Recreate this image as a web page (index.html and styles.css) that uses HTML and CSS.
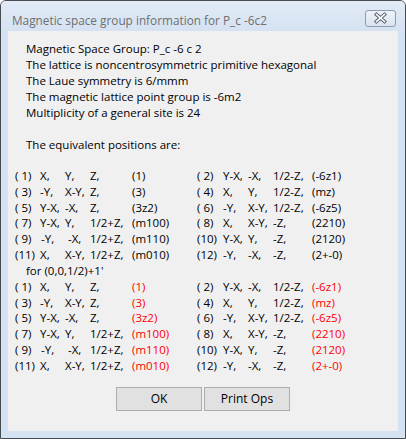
FILE: index.html
```
<!DOCTYPE html>
<html>
<head>
<meta charset="utf-8">
<link rel="stylesheet" href="styles.css">
</head>
<body>
<div class="window">
  <div class="titlebar">
    <div class="title">Magnetic space group information for P_c -6c2</div>
    <div class="close">
      <svg width="31" height="17" viewBox="0 0 31 17">
        <path d="M11.5 4.5 L19.5 11.5 M19.5 4.5 L11.5 11.5" stroke="#5b6573" stroke-width="3.6" stroke-linecap="square" fill="none"/>
        <path d="M11.5 4.5 L19.5 11.5 M19.5 4.5 L11.5 11.5" stroke="#ffffff" stroke-width="1.6" stroke-linecap="square" fill="none"/>
      </svg>
    </div>
  </div>
  <div class="client">
    <div class="info">
      <div>Magnetic Space Group: P_c -6 c 2</div>
      <div>The lattice is noncentrosymmetric primitive hexagonal</div>
      <div>The Laue symmetry is 6/mmm</div>
      <div>The magnetic lattice point group is -6m2</div>
      <div>Multiplicity of a general site is 24</div>
      <div>&nbsp;</div>
      <div>The equivalent positions are:</div>
    </div>
    <div class="ops">
      <span>( 1)</span><span>X,</span><span>Y,</span><span>Z,</span><span>(1)</span>
      <span>( 2)</span><span>Y-X,</span><span>-X,</span><span>1/2-Z,</span><span>(-6z1)</span>
      <span>( 3)</span><span>-Y,</span><span>X-Y,</span><span>Z,</span><span>(3)</span>
      <span>( 4)</span><span>X,</span><span>Y,</span><span>1/2-Z,</span><span>(mz)</span>
      <span>( 5)</span><span>Y-X,</span><span>-X,</span><span>Z,</span><span>(3z2)</span>
      <span>( 6)</span><span>-Y,</span><span>X-Y,</span><span>1/2-Z,</span><span>(-6z5)</span>
      <span>( 7)</span><span>Y-X,</span><span>Y,</span><span>1/2+Z,</span><span>(m100)</span>
      <span>( 8)</span><span>X,</span><span>X-Y,</span><span>-Z,</span><span>(2210)</span>
      <span>( 9)</span><span class="sh1">-Y,</span><span class="sh3">-X,</span><span>1/2+Z,</span><span>(m110)</span>
      <span>(10)</span><span>Y-X,</span><span>Y,</span><span>-Z,</span><span>(2120)</span>
      <span>(11)</span><span>X,</span><span>X-Y,</span><span>1/2+Z,</span><span>(m010)</span>
      <span>(12)</span><span>-Y,</span><span>-X,</span><span>-Z,</span><span>(2+-0)</span>
      <span class="for">for (0,0,1/2)+1'</span>
      <span>( 1)</span><span>X,</span><span>Y,</span><span>Z,</span><span class="red">(1)</span>
      <span>( 2)</span><span>Y-X,</span><span>-X,</span><span>1/2-Z,</span><span class="red">(-6z1)</span>
      <span>( 3)</span><span>-Y,</span><span>X-Y,</span><span>Z,</span><span class="red">(3)</span>
      <span>( 4)</span><span>X,</span><span>Y,</span><span>1/2-Z,</span><span class="red">(mz)</span>
      <span>( 5)</span><span>Y-X,</span><span>-X,</span><span>Z,</span><span class="red">(3z2)</span>
      <span>( 6)</span><span>-Y,</span><span>X-Y,</span><span>1/2-Z,</span><span class="red">(-6z5)</span>
      <span>( 7)</span><span>Y-X,</span><span>Y,</span><span>1/2+Z,</span><span class="red">(m100)</span>
      <span>( 8)</span><span>X,</span><span>X-Y,</span><span>-Z,</span><span class="red">(2210)</span>
      <span>( 9)</span><span class="sh1">-Y,</span><span class="sh3">-X,</span><span>1/2+Z,</span><span class="red">(m110)</span>
      <span>(10)</span><span>Y-X,</span><span>Y,</span><span>-Z,</span><span class="red">(2120)</span>
      <span>(11)</span><span>X,</span><span>X-Y,</span><span>1/2+Z,</span><span class="red">(m010)</span>
      <span>(12)</span><span>-Y,</span><span>-X,</span><span>-Z,</span><span class="red">(2+-0)</span>
    </div>
    <div class="buttons">
      <button class="btn">OK</button>
      <button class="btn">Print Ops</button>
    </div>
  </div>
</div>
</body>
</html>
```
FILE: styles.css
```
html, body {
  margin: 0;
  padding: 0;
  background: #ffffff;
}
body {
  font-family: "Open Sans", "Noto Sans", sans-serif;
  font-size: 11.5px;
  color: #000;
}
.window {
  width: 406px;
  height: 439px;
  box-sizing: border-box;
  border: 1px solid #474b52;
  border-radius: 6px 6px 0 0;
  background: #d5e2f2;
  display: flex;
  flex-direction: column;
  overflow: hidden;
}
.titlebar {
  height: 30px;
  flex: none;
  display: flex;
  justify-content: space-between;
  align-items: flex-start;
  padding: 0 9px 0 11px;
  background: linear-gradient(#e2ebf6, #d5e2f2);
}
.title {
  margin-top: 11px;
  line-height: 16px;
  font-size: 11.8px;
  color: #6f6f6f;
  white-space: nowrap;
}
.close {
  margin-top: 9px;
  width: 31px;
  height: 17px;
  box-sizing: border-box;
  border: 1px solid #8e9bad;
  border-radius: 3px;
  background: linear-gradient(#eef3f9, #d9e3f0);
  display: flex;
}
.close svg {
  margin: -1px;
}
.client {
  flex: 1;
  margin: 0 7px 7px 7px;
  background: #f0f0f0;
  display: flex;
  flex-direction: column;
  padding-top: 10px;
}
.info {
  padding-left: 18px;
  line-height: 16px;
  white-space: nowrap;
}
.ops {
  margin-top: 15px;
  padding-left: 7px;
  display: grid;
  grid-template-columns: 25px 25px 25px 42px 65px 26px 25px 25px 39px 1fr;
  grid-auto-rows: 15.83px;
  line-height: 15.83px;
  white-space: pre;
}
.ops .for {
  grid-column: 1 / -1;
  padding-left: 11px;
}
.ops .red {
  color: #ff0000;
}
.ops .sh1 {
  padding-left: 1px;
}
.ops .sh3 {
  padding-left: 3px;
}
.buttons {
  margin-top: 13px;
  display: flex;
  justify-content: center;
  gap: 2px;
}
.btn {
  width: 86px;
  height: 24px;
  box-sizing: border-box;
  border: 1px solid #adadad;
  background: #e1e1e1;
  font-family: inherit;
  font-size: 12px;
  color: #000;
  padding: 0;
  margin: 0;
}
```
